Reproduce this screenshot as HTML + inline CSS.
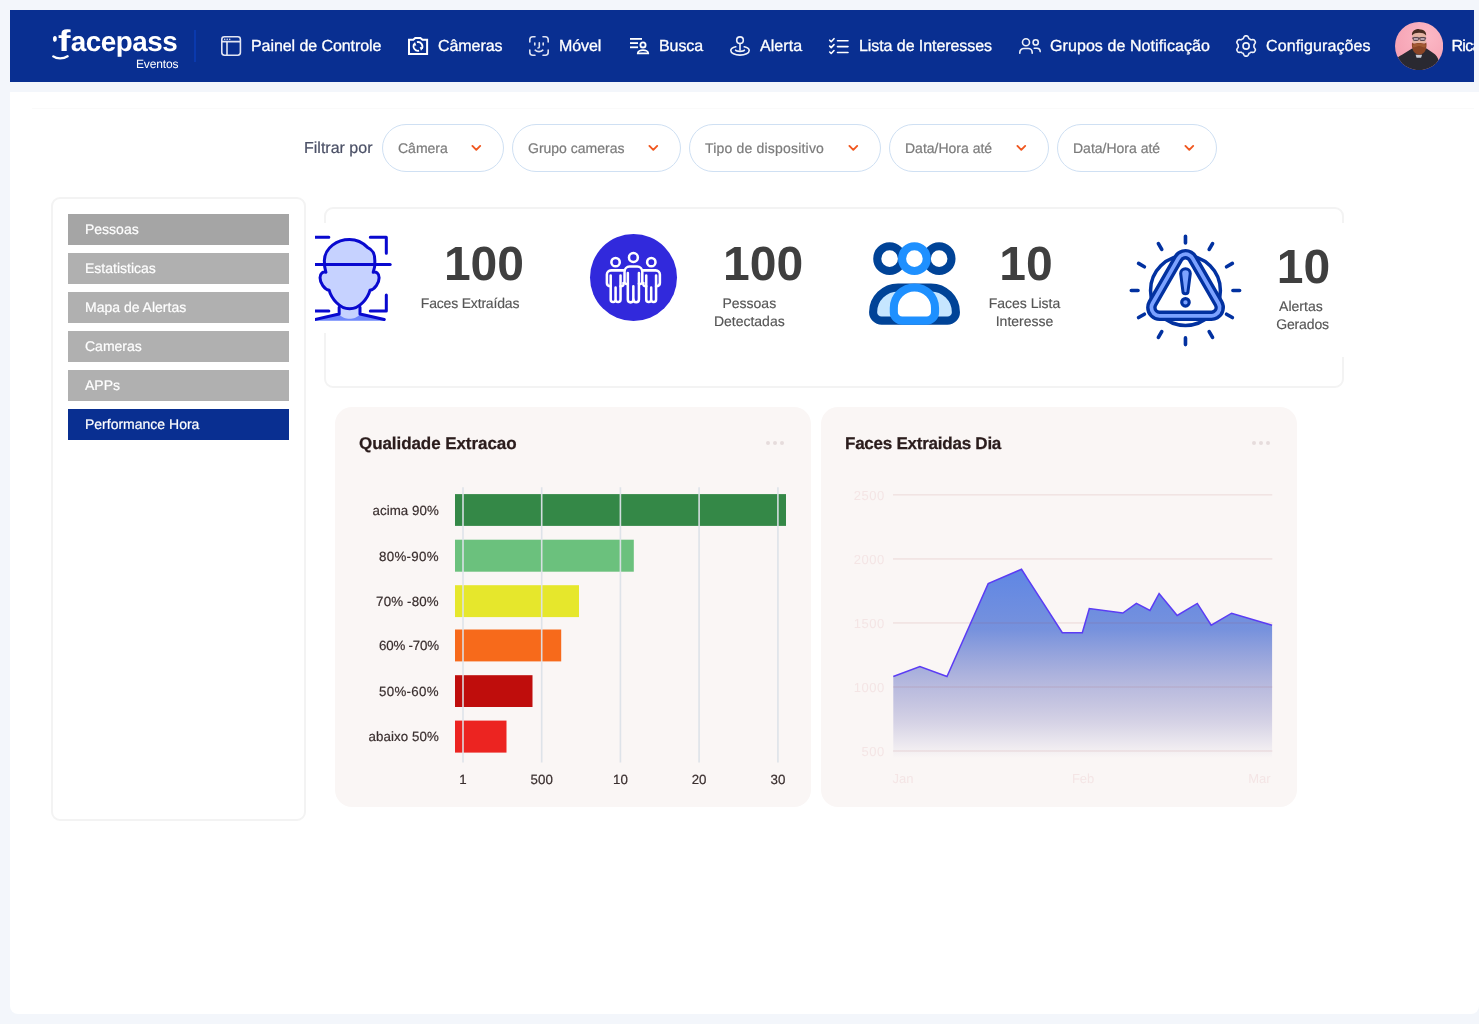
<!DOCTYPE html>
<html lang="pt-BR">
<head>
<meta charset="utf-8">
<title>Facepass Eventos</title>
<style>
*{box-sizing:border-box;margin:0;padding:0}
#header,#main{will-change:transform}html,body{width:1479px;height:1024px;overflow:hidden;background:#f3f6fb}
body{font-family:"Liberation Sans",Arial,sans-serif;position:relative;color:#333;-webkit-font-smoothing:antialiased;text-rendering:geometricPrecision}
.abs{position:absolute}
#header{position:absolute;left:10px;top:10px;width:1464px;height:72px;background:#092f91;overflow:hidden}
#header .nav{position:absolute;top:0;height:72px;color:#fff;font-size:16px;line-height:20px;white-space:nowrap}
#header .nav span{position:absolute;top:27px;left:0;-webkit-text-stroke:.3px #fff;letter-spacing:-.07px}
#header svg.ic{position:absolute;top:25px;width:22px;height:22px;overflow:visible}
#main{position:absolute;left:10px;top:92px;width:1469px;height:922px;background:#fff;border-radius:0 0 8px 8px}
#topline{position:absolute;left:22px;top:16px;width:1442px;height:1px;background:#fafafa}
.pill{position:absolute;top:32px;height:48px;border:1px solid #cfe0f3;border-radius:24px;font-size:14px;color:#7b7b7b;line-height:20px;white-space:nowrap}
.pill span{position:absolute;left:15px;top:13px;-webkit-text-stroke:.2px #7b7b7b}
.pill svg{position:absolute;right:21px;top:19px;width:11px;height:8px}
#side{position:absolute;left:41px;top:105px;width:255px;height:624px;border:2px solid #f3f3f3;border-radius:9px;background:#fff}
#side .btn{position:absolute;left:15px;-webkit-text-stroke:.2px #fff;width:221px;height:31px;background:#b0b0b0;color:#fff;font-size:14px;line-height:31px;padding-left:17px;white-space:nowrap}
#stats{position:absolute;left:314px;top:115px;width:1020px;height:181px;border:2px solid #f3f3f3;border-radius:9px;background:#fff}
.num{position:absolute;font-weight:700;font-size:48px;line-height:48px;color:#3f3f3f;white-space:nowrap}
.lbl{position:absolute;font-size:14px;line-height:18px;color:#555;-webkit-text-stroke:.15px #555;text-align:center;white-space:nowrap}
.card{position:absolute;top:315px;width:476px;height:400px;background:#faf6f5;border-radius:17px}
.card h3{position:absolute;left:24px;top:26px;font-size:17px;line-height:22px;font-weight:700;color:#2b1c1c;white-space:nowrap;-webkit-text-stroke:.25px #2b1c1c;letter-spacing:-.07px}
.card .dots{position:absolute;left:431px;top:34px;width:18px;height:4px}
.card .dots i{position:absolute;top:0;width:4px;height:4px;border-radius:2px;background:#e6dcdc}
#c1 text{stroke:#3a2f2f;stroke-width:.2px}
</style>
</head>
<body>
<div id="header">
  <div id="logo">
    <div class="abs" style="left:47.5px;top:15px;height:34px;line-height:34px;font-weight:700;color:#fff;white-space:nowrap;font-size:27.8px;letter-spacing:-.45px"><span style="font-size:30px;display:inline-block;transform:scaleX(1.25);transform-origin:0 50%;margin-right:3.700px">f</span>acepass</div>
    <svg class="abs" style="left:40px;top:18px" width="22" height="34" viewBox="0 0 22 34"><ellipse cx="4.900" cy="10.900" rx="1.900" ry="2.800" fill="#fff"/><path d="M3.300 28.400c3.500 2.600 10 2.600 14.300 -0.100" fill="none" stroke="#fff" stroke-width="2.400" stroke-linecap="round"/></svg>
    <div class="abs" style="left:126px;top:47px;font-size:12px;line-height:14px;color:#fff;letter-spacing:-0.15px;white-space:nowrap">Eventos</div>
    <div class="abs" style="left:184px;top:20px;width:2px;height:32px;background:#0a39ad"></div>
  </div>
  <div id="navs">
    <svg class="ic" style="left:210px" viewBox="0 0 22 22"><g fill="none" stroke="#e3e6f3" stroke-width="1.6"><rect x="1.8" y="1.8" width="18.6" height="18.4" rx="2.6"/><path d="M1.8 6.6h18.6M7 6.6v13.6"/></g><g fill="#e3e6f3"><circle cx="4.7" cy="4.2" r=".8"/><circle cx="7.2" cy="4.2" r=".8"/><circle cx="9.7" cy="4.2" r=".8"/></g></svg>
    <div class="nav" style="left:241px"><span>Painel de Controle</span></div>
    <svg class="ic" style="left:397px" viewBox="0 0 22 22"><path d="M2 4.800H6.300L8.300 2.900H13.400L15.500 4.800H20.100V19.100H2Z" fill="none" stroke="#fff" stroke-width="2" stroke-linejoin="miter"/><g fill="none" stroke="#fff" stroke-width="1.800"><path d="M9.900 7.150A4.500 4.500 0 0 1 14.800 13.800"/><path d="M12.100 15.650A4.500 4.500 0 0 1 7.200 9"/></g><path d="M12.700 12.100l3.600.7-2.300 2.900zM9.300 10.700l-3.600-.7 2.300-2.900z" fill="#fff"/></svg>
    <div class="nav" style="left:428px"><span>Câmeras</span></div>
    <svg class="ic" style="left:518px" viewBox="0 0 22 22"><g fill="none" stroke="#dfe3f2" stroke-width="1.6" stroke-linecap="round"><path d="M1.8 7V4.8a3 3 0 0 1 3-3H7M15 1.8h2.2a3 3 0 0 1 3 3V7M20.2 15v2.2a3 3 0 0 1-3 3H15M7 20.2H4.800a3 3 0 0 1-3-3V15"/><path d="M6.800 8v2M15.200 8v2M11.300 7.800v4.200c0 .7-.5 1-1.300 1M7.200 15.200c2 1.900 5.600 1.900 7.600 0"/></g></svg>
    <div class="nav" style="left:549px"><span>Móvel</span></div>
    <svg class="ic" style="left:619px" viewBox="0 0 22 22"><g fill="#fff"><rect x="1" y="3" width="12" height="1.8"/><rect x="1" y="7.200" width="8" height="1.8"/><rect x="1" y="11.400" width="8" height="1.8"/></g><circle cx="14" cy="9.900" r="2.600" fill="none" stroke="#fff" stroke-width="1.8"/><path d="M8.800 18.300c0-2 2.600-3.200 5.200-3.200s5.200 1.200 5.200 3.200z" fill="none" stroke="#fff" stroke-width="1.800" stroke-linejoin="miter"/></svg>
    <div class="nav" style="left:649px"><span>Busca</span></div>
    <svg class="ic" style="left:719px" viewBox="0 0 22 22"><g fill="none" stroke="#f1f3fa" stroke-width="1.600" stroke-linecap="round"><circle cx="11" cy="5.200" r="3.300"/><path d="M11 8.600v6.400"/><path d="M6.600 15.200c.8 1.600 8 1.600 8.800 0"/><path d="M6.800 11.700C3.800 12.400 1.800 13.800 1.800 15.400c0 2.600 4.100 4.700 9.200 4.700s9.200-2.100 9.200-4.700c0-1.600-2-3-5-3.700"/></g></svg>
    <div class="nav" style="left:750px"><span style="letter-spacing:.05px">Alerta</span></div>
    <svg class="ic" style="left:818px" viewBox="0 0 22 22"><g fill="none" stroke="#fff" stroke-width="1.600" stroke-linecap="round" stroke-linejoin="round"><path d="M9.500 5.700H20M9.500 11.600H20M9.500 17.500H20"/><path d="M1.700 5.200l1.500 1.500 2.800-3M1.700 11.100l1.500 1.500 2.800-3M1.700 17l1.500 1.500 2.800-3"/></g></svg>
    <div class="nav" style="left:849px"><span>Lista de Interesses</span></div>
    <svg class="ic" style="left:1008px" viewBox="0 0 22 22"><g fill="none" stroke="#edf0f8" stroke-width="1.600" stroke-linecap="round"><circle cx="8" cy="7.200" r="3.500"/><path d="M1.800 18.300v-.8a4 4 0 0 1 4-4h4.400a4 4 0 0 1 4 4v.8"/><circle cx="17.700" cy="7.400" r="2.600"/><path d="M16.200 13.300h2.600a3.400 3.400 0 0 1 3.400 3.300"/></g></svg>
    <div class="nav" style="left:1040px"><span style="letter-spacing:.08px">Grupos de Notificação</span></div>
    <svg class="ic" style="left:1225px" viewBox="0 0 22 22"><g fill="none" stroke="#f1f3fa" stroke-width="1.600" stroke-linejoin="round"><circle cx="11.100" cy="11" r="3.100"/><path d="M19.00 11.00L18.98 11.52L18.93 12.03L19.31 12.63L19.79 13.33L20.22 14.10L20.43 14.87L20.16 15.47L19.85 16.05L19.50 16.61L19.11 17.15L18.34 17.35L17.46 17.36L16.62 17.29L15.91 17.27L15.49 17.57L15.05 17.84L14.59 18.09L14.12 18.30L13.79 18.92L13.43 19.69L12.98 20.45L12.42 21.01L11.76 21.08L11.10 21.10L10.44 21.08L9.78 21.01L9.22 20.45L8.77 19.69L8.41 18.92L8.08 18.30L7.61 18.09L7.15 17.84L6.71 17.57L6.29 17.27L5.58 17.29L4.74 17.36L3.86 17.35L3.09 17.15L2.70 16.61L2.35 16.05L2.04 15.47L1.77 14.87L1.98 14.10L2.41 13.33L2.89 12.63L3.27 12.03L3.22 11.52L3.20 11.00L3.22 10.48L3.27 9.97L2.89 9.37L2.41 8.67L1.98 7.90L1.77 7.13L2.04 6.53L2.35 5.95L2.70 5.39L3.09 4.85L3.86 4.65L4.74 4.64L5.58 4.71L6.29 4.73L6.71 4.43L7.15 4.16L7.61 3.91L8.08 3.70L8.41 3.08L8.77 2.31L9.22 1.55L9.78 0.99L10.44 0.92L11.10 0.90L11.76 0.92L12.42 0.99L12.98 1.55L13.43 2.31L13.79 3.08L14.12 3.70L14.59 3.91L15.05 4.16L15.49 4.43L15.91 4.73L16.62 4.71L17.46 4.64L18.34 4.65L19.11 4.85L19.50 5.39L19.85 5.95L20.16 6.53L20.43 7.13L20.22 7.90L19.79 8.67L19.31 9.37L18.93 9.97L18.98 10.48Z"/></g></svg>
    <div class="nav" style="left:1256px"><span style="letter-spacing:.12px">Configurações</span></div>
    <svg class="abs" style="left:1385px;top:11.800px" width="48.200" height="48.200" viewBox="0 0 48 48"><defs><clipPath id="avc"><circle cx="24" cy="24" r="24"/></clipPath><radialGradient id="avg" cx=".65" cy=".3" r=".8"><stop offset="0" stop-color="#fcb9c6"/><stop offset="1" stop-color="#f59fb1"/></radialGradient></defs><g clip-path="url(#avc)"><rect width="48" height="48" fill="url(#avg)"/><path d="M0 48V40C1.500 36 3.500 34 7 32.500L17 26.500H31.500L38 31C41 33 42.500 35 43.500 38.500L46 48Z" fill="#2a2931"/><path d="M20.500 32.500h6.500l-1 3h-4.500z" fill="#c9ccd6"/><path d="M17.300 12C17.300 8.500 20 7.200 24 7.200S30.800 8.500 30.800 12.500V21H17.300Z" fill="#e3b3a3"/><path d="M16.900 13.500C16.500 9.500 19.500 7 24 7.100S31.500 9.500 31 13.500C29.500 11.500 27 10.800 24 10.800S18.500 11.500 16.900 13.500Z" fill="#4a2c22"/><path d="M17 20.500C18.500 22.500 20.500 21 24 21S29.500 22.500 31.200 20.500C32 25 30.500 32.500 24.200 32.500S16.200 25 17 20.500Z" fill="#8a4526"/><path d="M17.500 24C18.500 27 21 23.800 24 23.800S29.500 27 30.800 24C30.500 22 28 21.500 24 21.500S18 22 17.500 24Z" fill="#a35a34"/><path d="M17.200 16h13.800" stroke="#4b3a45" stroke-width="1.300" fill="none"/><rect x="18.300" y="15.400" width="5" height="3" rx=".8" fill="#b9a3ad" stroke="#4b3a45" stroke-width=".9"/><rect x="24.900" y="15.400" width="5" height="3" rx=".8" fill="#b9a3ad" stroke="#4b3a45" stroke-width=".9"/></g></svg>
    <div class="nav" style="left:1441.500px"><span style="letter-spacing:-.7px">Ricardo</span></div>
  </div>
</div>
<div id="main">
  <div id="topline"></div>
  <div class="abs" style="left:294px;top:47px;font-size:16px;line-height:20px;color:#4b5066;white-space:nowrap;-webkit-text-stroke:.2px #4b5066">Filtrar por</div>
  <div class="pill" style="left:372px;width:122px"><span>Câmera</span><svg viewBox="0 0 11 8"><path d="M1.400 1.900 5.300 5.800 9.200 1.900" fill="none" stroke="#f0571f" stroke-width="1.900" stroke-linecap="round" stroke-linejoin="round"/></svg></div>
  <div class="pill" style="left:502px;width:169px"><span>Grupo cameras</span><svg viewBox="0 0 11 8"><path d="M1.400 1.900 5.300 5.800 9.200 1.900" fill="none" stroke="#f0571f" stroke-width="1.900" stroke-linecap="round" stroke-linejoin="round"/></svg></div>
  <div class="pill" style="left:679px;width:192px"><span style="letter-spacing:.19px">Tipo de dispositivo</span><svg viewBox="0 0 11 8"><path d="M1.400 1.900 5.300 5.800 9.200 1.900" fill="none" stroke="#f0571f" stroke-width="1.900" stroke-linecap="round" stroke-linejoin="round"/></svg></div>
  <div class="pill" style="left:879px;width:160px"><span>Data/Hora até</span><svg viewBox="0 0 11 8"><path d="M1.400 1.900 5.300 5.800 9.200 1.900" fill="none" stroke="#f0571f" stroke-width="1.900" stroke-linecap="round" stroke-linejoin="round"/></svg></div>
  <div class="pill" style="left:1047px;width:160px"><span>Data/Hora até</span><svg viewBox="0 0 11 8"><path d="M1.400 1.900 5.300 5.800 9.200 1.900" fill="none" stroke="#f0571f" stroke-width="1.900" stroke-linecap="round" stroke-linejoin="round"/></svg></div>

  <div id="side">
    <div class="btn" style="top:15px;background:#a5a5a5">Pessoas</div>
    <div class="btn" style="top:54px">Estatisticas</div>
    <div class="btn" style="top:93px">Mapa de Alertas</div>
    <div class="btn" style="top:132px">Cameras</div>
    <div class="btn" style="top:171px">APPs</div>
    <div class="btn" style="top:210px;background:#092f91">Performance Hora</div>
  </div>

  <div id="stats"></div>
  <div id="statsin">
    <div class="abs" style="left:313px;top:131px;width:4px;height:110px;background:#fff"></div>
    <div class="abs" style="left:1331px;top:131px;width:4px;height:134px;background:#fff"></div>
    <svg class="abs" style="left:305px;top:133px" width="90" height="110" viewBox="93.1 0 837.9 1024">
      <path d="M93 880L318 828V760H512V828L745 880V892H93Z" fill="#6e86fb"/>
      <path d="M318 760V828C340 860 380 872 415 872C450 872 490 860 512 828V760Z" fill="#c6d2ff"/>
      <path d="M415 135C500 135 545 170 585 210C630 230 650 260 650 330L650 368C650 400 640 420 635 440C660 430 690 450 690 490C690 540 650 600 605 608C585 680 510 780 415 780C320 780 245 680 225 608C180 600 140 540 140 490C140 450 170 430 195 440C190 420 180 400 180 330C185 210 300 135 415 135Z" fill="#c6d2ff" stroke="#0909cf" stroke-width="28" stroke-linejoin="round"/>
      <g fill="none" stroke="#0909cf" stroke-width="28" stroke-linecap="round" stroke-linejoin="round">
        <path d="M0 368H793"/>
        <path d="M0 115H222M608 115H757V262M757 652V800H608M222 800H0"/>
        <path d="M318 765V828L60 888M512 765V828L738 880"/>
      </g>
    </svg>
    <div class="abs" style="left:579.8px;top:141.7px;width:87.4px;height:87.4px;border-radius:50%;background:#3129dc"></div>
    <svg class="abs" style="left:588px;top:153px" width="70" height="65" viewBox="0 0 1103 1024">
      <g fill="none" stroke="#fff" stroke-width="40" stroke-linecap="round" stroke-linejoin="round">
        <circle cx="277" cy="270" r="66"/><circle cx="840" cy="270" r="66"/>
        <path d="M200 480V860a38.500 38.500 0 0 0 77 0V670M277 860a38.500 38.500 0 0 0 78 0V480"/>
        <path d="M200 650C160 650 140 640 140 600V465a65 65 0 0 1 65 -65H400M400 600C410 640 390 650 355 650"/>
        <path d="M760 480V860a38.500 38.500 0 0 0 78 0V670M838 860a38.500 38.500 0 0 0 77 0V480"/>
        <path d="M915 650C955 650 975 640 975 600V465a65 65 0 0 0 -65 -65H716M716 600C706 640 726 650 760 650"/>
      </g>
      <g fill="#3129dc" stroke="#fff" stroke-width="40" stroke-linecap="round" stroke-linejoin="round">
        <circle cx="558" cy="197" r="70"/>
        <path d="M470 610C440 620 418 610 418 580V420a80 80 0 0 1 80 -80H618a80 80 0 0 1 80 80V580C698 610 677 620 645 610V860a42.500 42.500 0 0 1 -87 0a42.500 42.500 0 0 1 -88 0Z"/>
      </g>
      <g fill="none" stroke="#fff" stroke-width="40" stroke-linecap="round"><path d="M470 440V610M645 440V610M557 650V860"/></g>
    </svg>
    <svg class="abs" style="left:850px;top:143px" width="110" height="100" viewBox="0 0 1126 1024">
      <g fill="#fff" stroke="#004397" stroke-width="83"><circle cx="303" cy="242" r="126.500"/><circle cx="810" cy="242" r="126.500"/></g>
      <path d="M134 790C134 650 250 537 390 537H726C866 537 982 650 982 790A87 87 0 0 1 895 877H221A87 87 0 0 1 134 790Z" fill="#c6e6ff" stroke="#004397" stroke-width="83"/>
      <circle cx="557" cy="242" r="126.500" fill="#fff" stroke="#1e90ff" stroke-width="83"/>
      <path d="M346 790V748A211 211 0 0 1 768 748V790A87 87 0 0 1 681 877H433A87 87 0 0 1 346 790Z" fill="#fff" stroke="#1e90ff" stroke-width="83"/>
    </svg>
    <svg class="abs" style="left:1115px;top:138px" width="120" height="120" viewBox="0 0 1024 1024">
      <path d="M516.0 111.0L516.0 54.0M718.5 165.3L747.0 115.9M866.7 313.5L916.1 285.0M921.0 516.0L978.0 516.0M866.7 718.5L916.1 747.0M718.5 866.7L747.0 916.1M516.0 921.0L516.0 978.0M313.5 866.7L285.0 916.1M165.3 718.5L115.9 747.0M111.0 516.0L54.0 516.0M165.3 313.5L115.9 285.0M313.5 165.3L285.0 115.9" fill="none" stroke="#0231a0" stroke-width="31" stroke-linecap="round"/>
      <circle cx="516" cy="516" r="298" fill="#fff" stroke="#0231a0" stroke-width="30"/>
      <g stroke-linejoin="round">
        <path d="M516 277L738 662H295Z" fill="#0231a0" stroke="#0231a0" stroke-width="230"/>
        <path d="M516 277L738 662H295Z" fill="#7ca2ff" stroke="#7ca2ff" stroke-width="172"/>
        <path d="M516 277L738 662H295Z" fill="#0231a0" stroke="#0231a0" stroke-width="108"/>
        <path d="M516 277L738 662H295Z" fill="#fff" stroke="#fff" stroke-width="50"/>
      </g>
      <path d="M475 372a41 41 0 0 1 82 0L538 522a22 22 0 0 1 -44 0Z" fill="#7ca2ff" stroke="#0231a0" stroke-width="26" stroke-linejoin="round"/>
      <circle cx="516" cy="617" r="32" fill="#7ca2ff" stroke="#0231a0" stroke-width="27"/>
    </svg>
    <div class="num" id="n1" style="left:433.90px;top:148.77px">100</div>
    <div class="num" id="n2" style="left:713.10px;top:149.37px">100</div>
    <div class="num" id="n3" style="left:989.20px;top:149.37px">10</div>
    <div class="num" id="n4" style="left:1266.80px;top:152.27px">10</div>
    <div class="lbl" id="l1" style="letter-spacing:-.18px;left:390px;top:202.45px;width:140px">Faces Extraídas</div>
    <div class="lbl" id="l2" style="left:669.3px;top:201.75px;width:140px">Pessoas<br>Detectadas</div>
    <div class="lbl" id="l3" style="left:944.5px;top:201.75px;width:140px">Faces Lista<br>Interesse</div>
    <div class="lbl" id="l4" style="left:1221.7px;top:205.45px;width:140px"><span style="position:relative;left:-.8px">Alertas</span><br><span style="position:relative;left:.9px;letter-spacing:-.12px">Gerados</span></div>
  </div>

  <div class="card" id="c1" style="left:325px"><svg class="abs" style="left:0;top:0" width="476" height="400" viewBox="0 0 476 400" font-family="Liberation Sans, Arial, sans-serif" font-size="13.3" fill="#3a2f2f">
  <rect x="120" y="87.1" width="331" height="31.8" fill="#348847"/>
  <rect x="120" y="132.7" width="178.8" height="32.0" fill="#6bc17d"/>
  <rect x="120" y="178.2" width="124" height="31.9" fill="#e6e72c"/>
  <rect x="120" y="222.5" width="106.2" height="31.9" fill="#f76a1b"/>
  <rect x="120" y="268.2" width="77.5" height="31.8" fill="#bf0d0c"/>
  <rect x="120" y="313.6" width="51.5" height="32.0" fill="#ec2421"/>
  <rect x="127.2" y="80.3" width="1.6" height="275.2" fill="#dce1e8" fill-opacity=".95"/>
  <rect x="205.9" y="80.3" width="1.6" height="275.2" fill="#dce1e8" fill-opacity=".95"/>
  <rect x="284.6" y="80.3" width="1.6" height="275.2" fill="#dce1e8" fill-opacity=".95"/>
  <rect x="363.3" y="80.3" width="1.6" height="275.2" fill="#dce1e8" fill-opacity=".95"/>
  <rect x="442.1" y="80.3" width="1.6" height="275.2" fill="#dce1e8" fill-opacity=".95"/>
  <text x="103.8" y="107.85" text-anchor="end" letter-spacing=".05">acima 90%</text>
  <text x="103.8" y="153.55" text-anchor="end" letter-spacing=".3">80%-90%</text>
  <text x="103.8" y="199.0" text-anchor="end" letter-spacing=".17">70% -80%</text>
  <text x="103.8" y="243.3" text-anchor="end" letter-spacing="-.2">60% -70%</text>
  <text x="103.8" y="288.95" text-anchor="end" letter-spacing=".3">50%-60%</text>
  <text x="103.8" y="334.45" text-anchor="end" letter-spacing=".08">abaixo 50%</text>
  <text x="128" y="376.9" text-anchor="middle">1</text>
  <text x="206.7" y="376.9" text-anchor="middle">500</text>
  <text x="285.4" y="376.9" text-anchor="middle">10</text>
  <text x="364.1" y="376.9" text-anchor="middle">20</text>
  <text x="442.9" y="376.9" text-anchor="middle">30</text>
</svg><h3>Qualidade Extracao</h3><div class="dots"><i style="left:0"></i><i style="left:7px"></i><i style="left:14px"></i></div></div>
  <div class="card" id="c2" style="left:811px"><svg class="abs" style="left:0;top:0" width="476" height="400" viewBox="0 0 476 400" font-family="Liberation Sans, Arial, sans-serif" font-size="13" fill="#f4e5e5">
  <defs><linearGradient id="ag" x1="0" y1="162" x2="0" y2="351" gradientUnits="userSpaceOnUse"><stop offset="0" stop-color="#5a83e4" stop-opacity=".97"/><stop offset=".32" stop-color="#5f80d9" stop-opacity=".85"/><stop offset=".62" stop-color="#7b83c9" stop-opacity=".52"/><stop offset=".82" stop-color="#6e6eb9" stop-opacity=".25"/><stop offset="1" stop-color="#6e6eb9" stop-opacity="0"/></linearGradient></defs>
  <text x="63.6" y="92.7" text-anchor="end" letter-spacing=".45">2500</text>
  <text x="63.6" y="156.8" text-anchor="end" letter-spacing=".45">2000</text>
  <text x="63.6" y="220.8" text-anchor="end" letter-spacing=".45">1500</text>
  <text x="63.6" y="284.9" text-anchor="end" letter-spacing=".45">1000</text>
  <text x="63.6" y="348.9" text-anchor="end" letter-spacing=".45">500</text>
  <polygon points="72.3,269.5 98.9,259.6 126,269.5 167.2,176.6 200.5,162.3 241.3,225.7 261.3,225.7 268.3,201.5 301.8,206 315.4,196.4 329,203.4 338.1,186.5 356.2,208.5 376.3,196.4 390.2,218.2 410.6,206.2 451.1,218.2 451.1,351 72.3,351" fill="url(#ag)"/>
  <rect x="72" y="87.0" width="379.3" height="1.6" fill="#aa4646" fill-opacity=".1"/>
  <rect x="72" y="151.1" width="379.3" height="1.6" fill="#aa4646" fill-opacity=".1"/>
  <rect x="72" y="215.1" width="379.3" height="1.6" fill="#aa4646" fill-opacity=".1"/>
  <rect x="72" y="279.2" width="379.3" height="1.6" fill="#aa4646" fill-opacity=".1"/>
  <rect x="72" y="343.2" width="379.3" height="1.6" fill="#aa4646" fill-opacity=".1"/>
  <polyline points="72.3,269.5 98.9,259.6 126,269.5 167.2,176.6 200.5,162.3 241.3,225.7 261.3,225.7 268.3,201.5 301.8,206 315.4,196.4 329,203.4 338.1,186.5 356.2,208.5 376.3,196.4 390.2,218.2 410.6,206.2 451.1,218.2" fill="none" stroke="#5b3cf4" stroke-width="1.5" stroke-linejoin="miter"/>
  <text x="71.5" y="375.6">Jan</text>
  <text x="262.1" y="375.6" text-anchor="middle">Feb</text>
  <text x="449.6" y="375.6" text-anchor="end">Mar</text>
</svg><h3 style="letter-spacing:-.24px">Faces Extraidas Dia</h3><div class="dots"><i style="left:0"></i><i style="left:7px"></i><i style="left:14px"></i></div></div>
</div>
</body>
</html>
